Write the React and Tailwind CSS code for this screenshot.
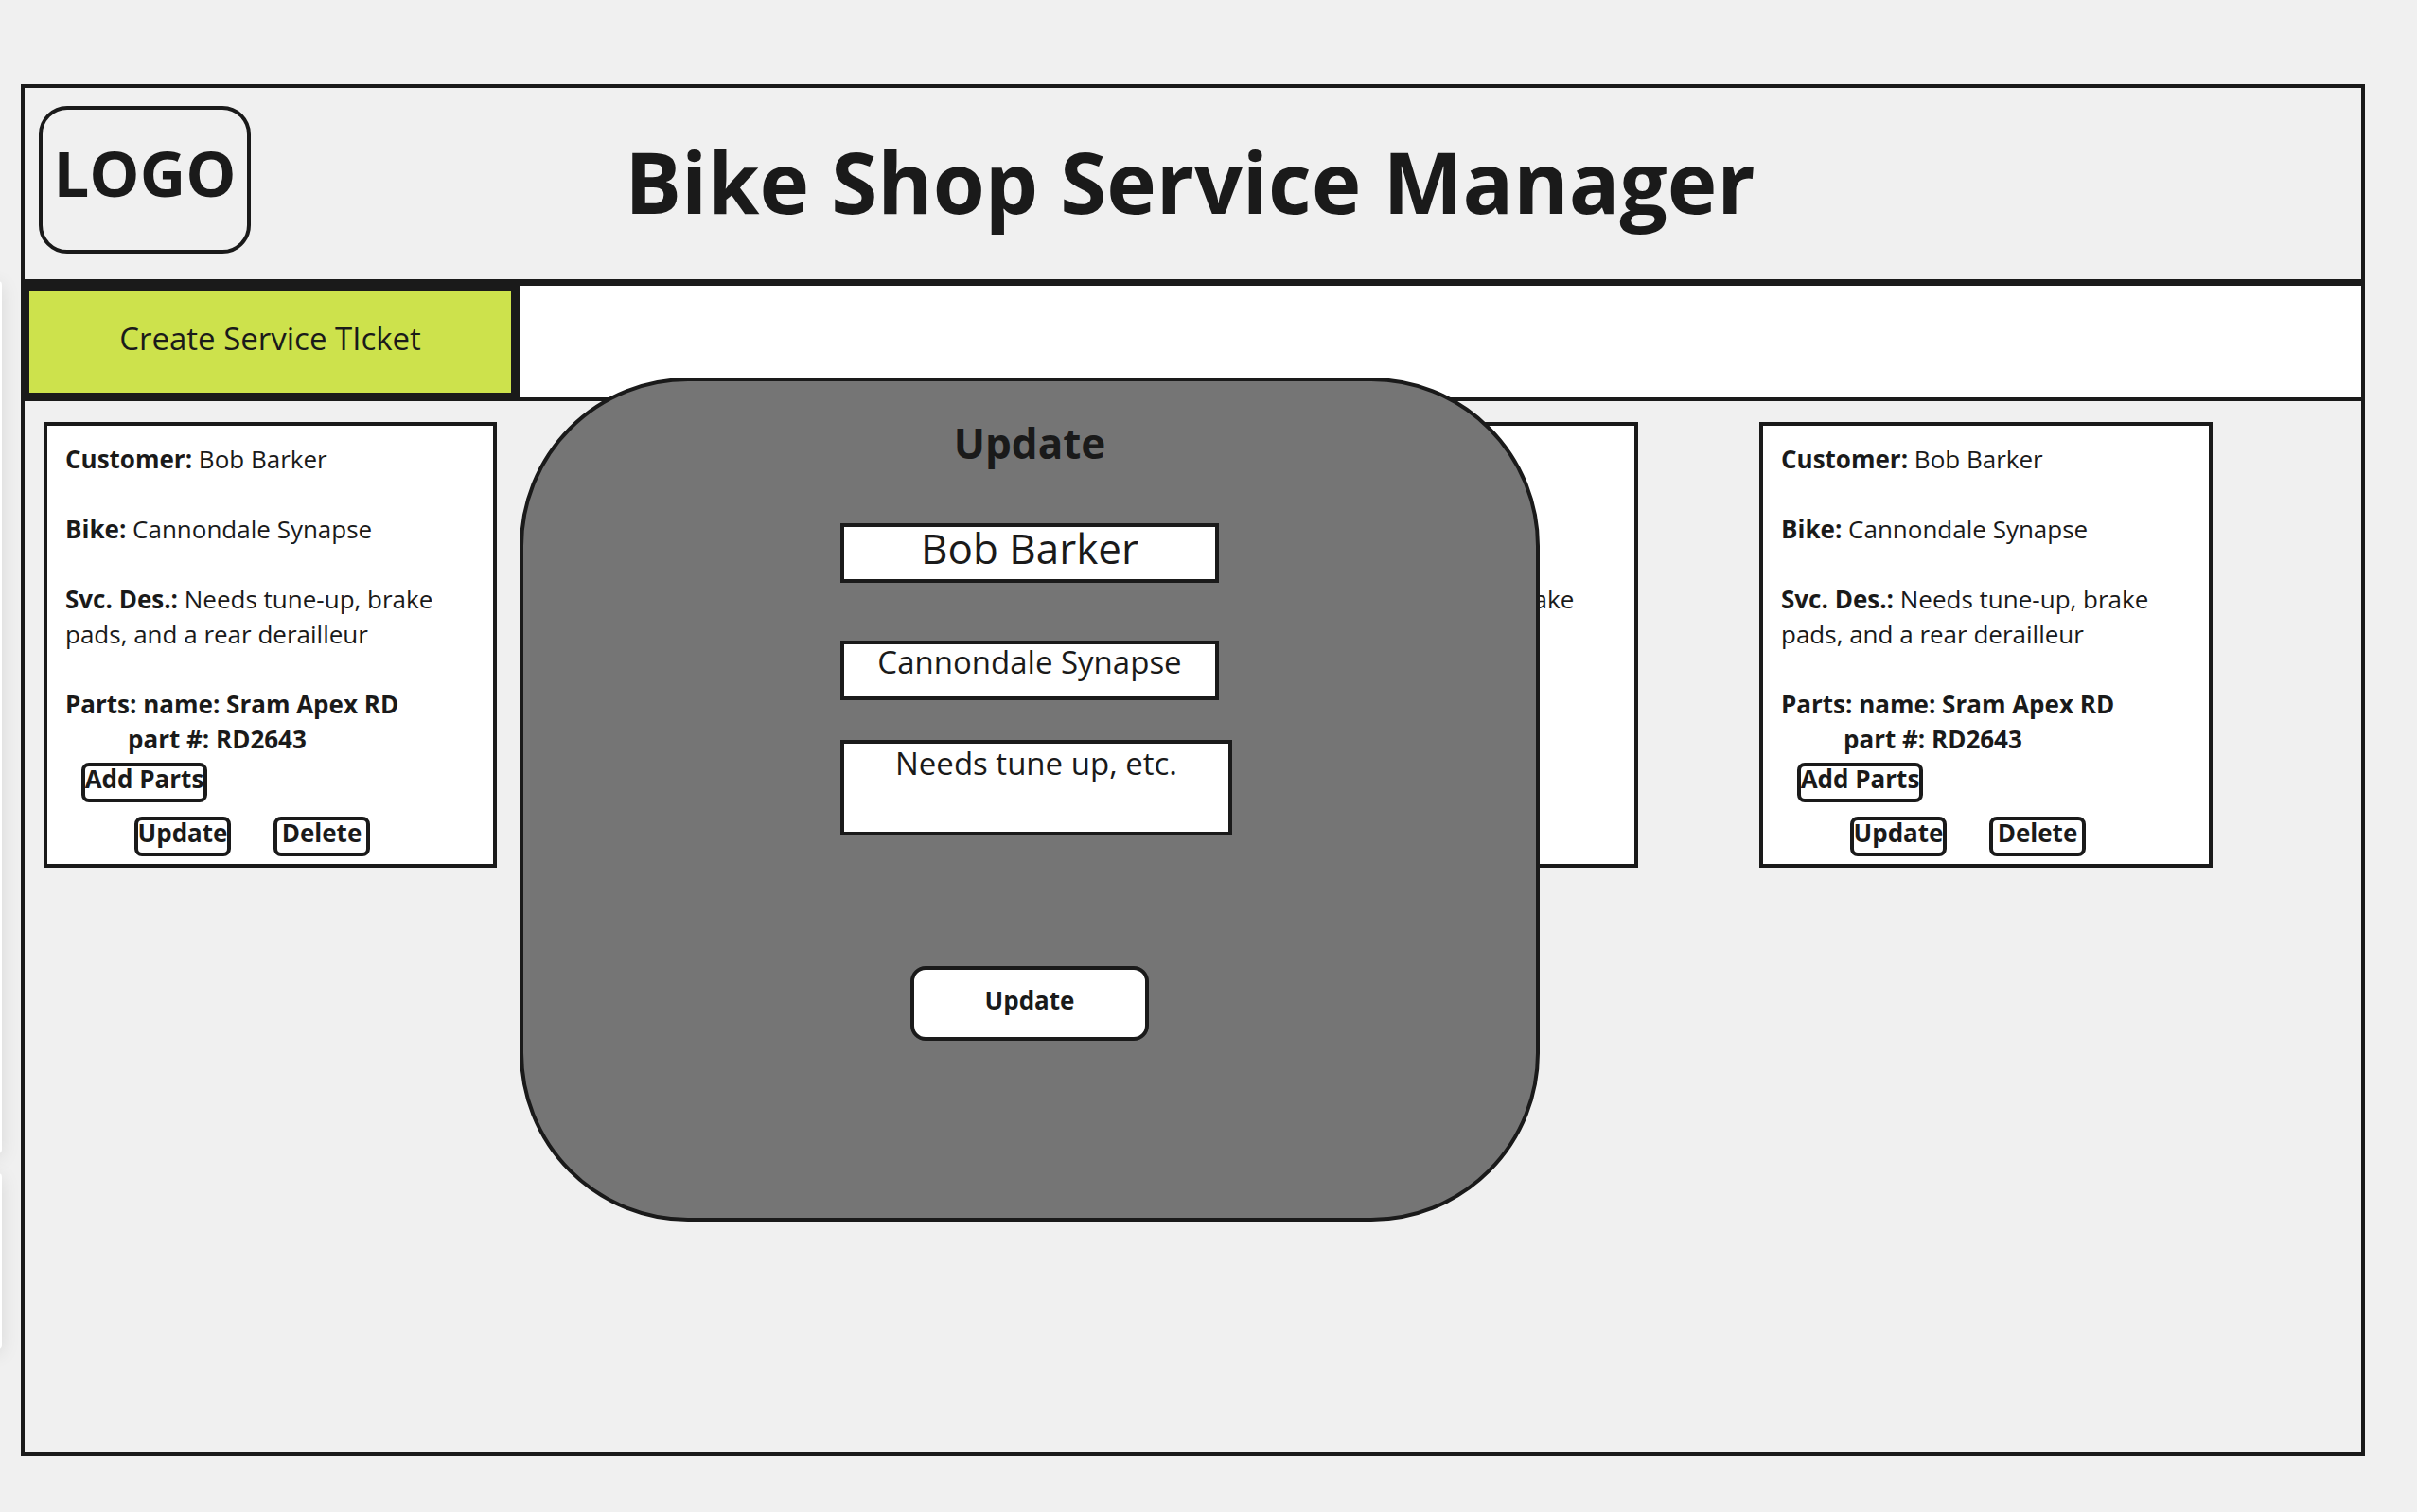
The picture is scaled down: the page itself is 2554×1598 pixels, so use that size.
const activeTickets = [1, 2, 3];

const cardButton =
  "flex h-[42px] items-start justify-center whitespace-nowrap rounded-lg border-4 border-[#1a1a1a] font-bold leading-[26px]";

function TicketCard() {
  return (
    <article className="w-[479px] shrink-0 border-4 border-[#1a1a1a] bg-white px-[19px] pt-[17px] pb-2">
      <p className="mb-[37px]">
        <strong>Customer:</strong> Bob Barker
      </p>
      <p className="mb-[37px]">
        <strong>Bike:</strong> Cannondale Synapse
      </p>
      <p className="mb-[37px]">
        <strong>Svc. Des.:</strong> Needs tune-up, brake pads, and a rear derailleur
      </p>
      <p className="font-bold">Parts: name: Sram Apex RD</p>
      <p className="pl-[66px] font-bold">part #: RD2643</p>
      <div className="mt-1.5 pl-[17px]">
        <button type="button" className={cardButton + " w-[133px]"}>Add Parts</button>
      </div>
      <div className="mt-[15px] flex gap-[45px] pl-[73px]">
        <button type="button" className={cardButton + " w-[102px]"}>Update</button>
        <button type="button" className={cardButton + " w-[102px]"}>Delete</button>
      </div>
    </article>
  );
}

function UpdateDialog() {
  const field = "block border-4 border-[#1a1a1a] bg-white px-2 text-center outline-none";
  return (
    <form
      role="dialog"
      aria-labelledby="dialog-title"
      onSubmit={(e) => e.preventDefault()}
      className="absolute top-[306px] left-[523px] flex h-[892px] w-[1078px] flex-col items-center rounded-[178px] border-4 border-[#1a1a1a] bg-[#757575] pt-[35px]"
    >
      <h2 id="dialog-title" className="text-[44px] leading-[60px] font-bold">Update</h2>
      <div className="mt-[55px] flex w-[400px] flex-col">
        <input aria-label="Customer" defaultValue="Bob Barker" className={field + " h-[63px] w-full pb-3 text-[44px] leading-[42px]"} />
        <input aria-label="Bike" defaultValue="Cannondale Synapse" className={field + " mt-[61px] h-[63px] w-full pb-[18px] text-[33px] leading-[36px]"} />
        <textarea
          aria-label="Service description"
          defaultValue="Needs tune up, etc."
          className={field + " mt-[42px] h-[101px] w-[414px] resize-none overflow-hidden text-[33px] leading-[42px]"}
        />
      </div>
      <button type="submit" className="mt-[138px] h-[79px] w-[252px] rounded-2xl border-4 border-[#1a1a1a] bg-white pb-1.5 font-bold">
        Update
      </button>
    </form>
  );
}

export default function App() {
  return (
    <div className="relative min-h-screen overflow-hidden bg-[#f0f0f0] pt-[89px] pr-[55px] pb-[59px] pl-[22px] font-['Open_Sans',sans-serif] text-[26px] leading-[37px] text-[#1a1a1a]">
      <div className="absolute top-[297px] -left-10 h-[922px] w-[42px] rounded bg-white shadow-[0_4px_20px_rgba(0,0,0,0.1)]" />
      <div className="absolute top-[1240px] -left-10 h-[186px] w-[42px] rounded bg-white shadow-[0_4px_20px_rgba(0,0,0,0.1)]" />

      <div className="relative flex min-h-[1450px] flex-col border-4 border-[#1a1a1a] bg-[#f0f0f0]">
        <header className="relative flex h-[202px] items-center justify-center pr-1.5 pb-1.5">
          <div className="absolute top-[19px] left-[15px] flex h-[156px] w-[224px] justify-center rounded-[30px] border-4 border-[#1a1a1a] pt-[21px] text-[67px] leading-[91px] font-bold">
            LOGO
          </div>
          <h1 className="text-[89px] leading-[121px] font-bold">Bike Shop Service Manager</h1>
        </header>

        <nav className="flex h-[129px] border-t-[7px] border-b-4 border-[#1a1a1a] bg-white">
          <button
            type="button"
            className="-mt-[3px] -mb-1 -ml-1 w-[527px] border-9 border-[#1a1a1a] bg-[#cde24c] pb-2 text-[33px] leading-[45px]"
          >
            Create Service TIcket
          </button>
        </nav>

        <main className="flex gap-32 px-5 pt-[22px]">
          <section className="flex gap-[124px]">
            {activeTickets.map((id) => (
              <TicketCard key={id} />
            ))}
          </section>
          <TicketCard />
        </main>

        <UpdateDialog />
      </div>
    </div>
  );
}
